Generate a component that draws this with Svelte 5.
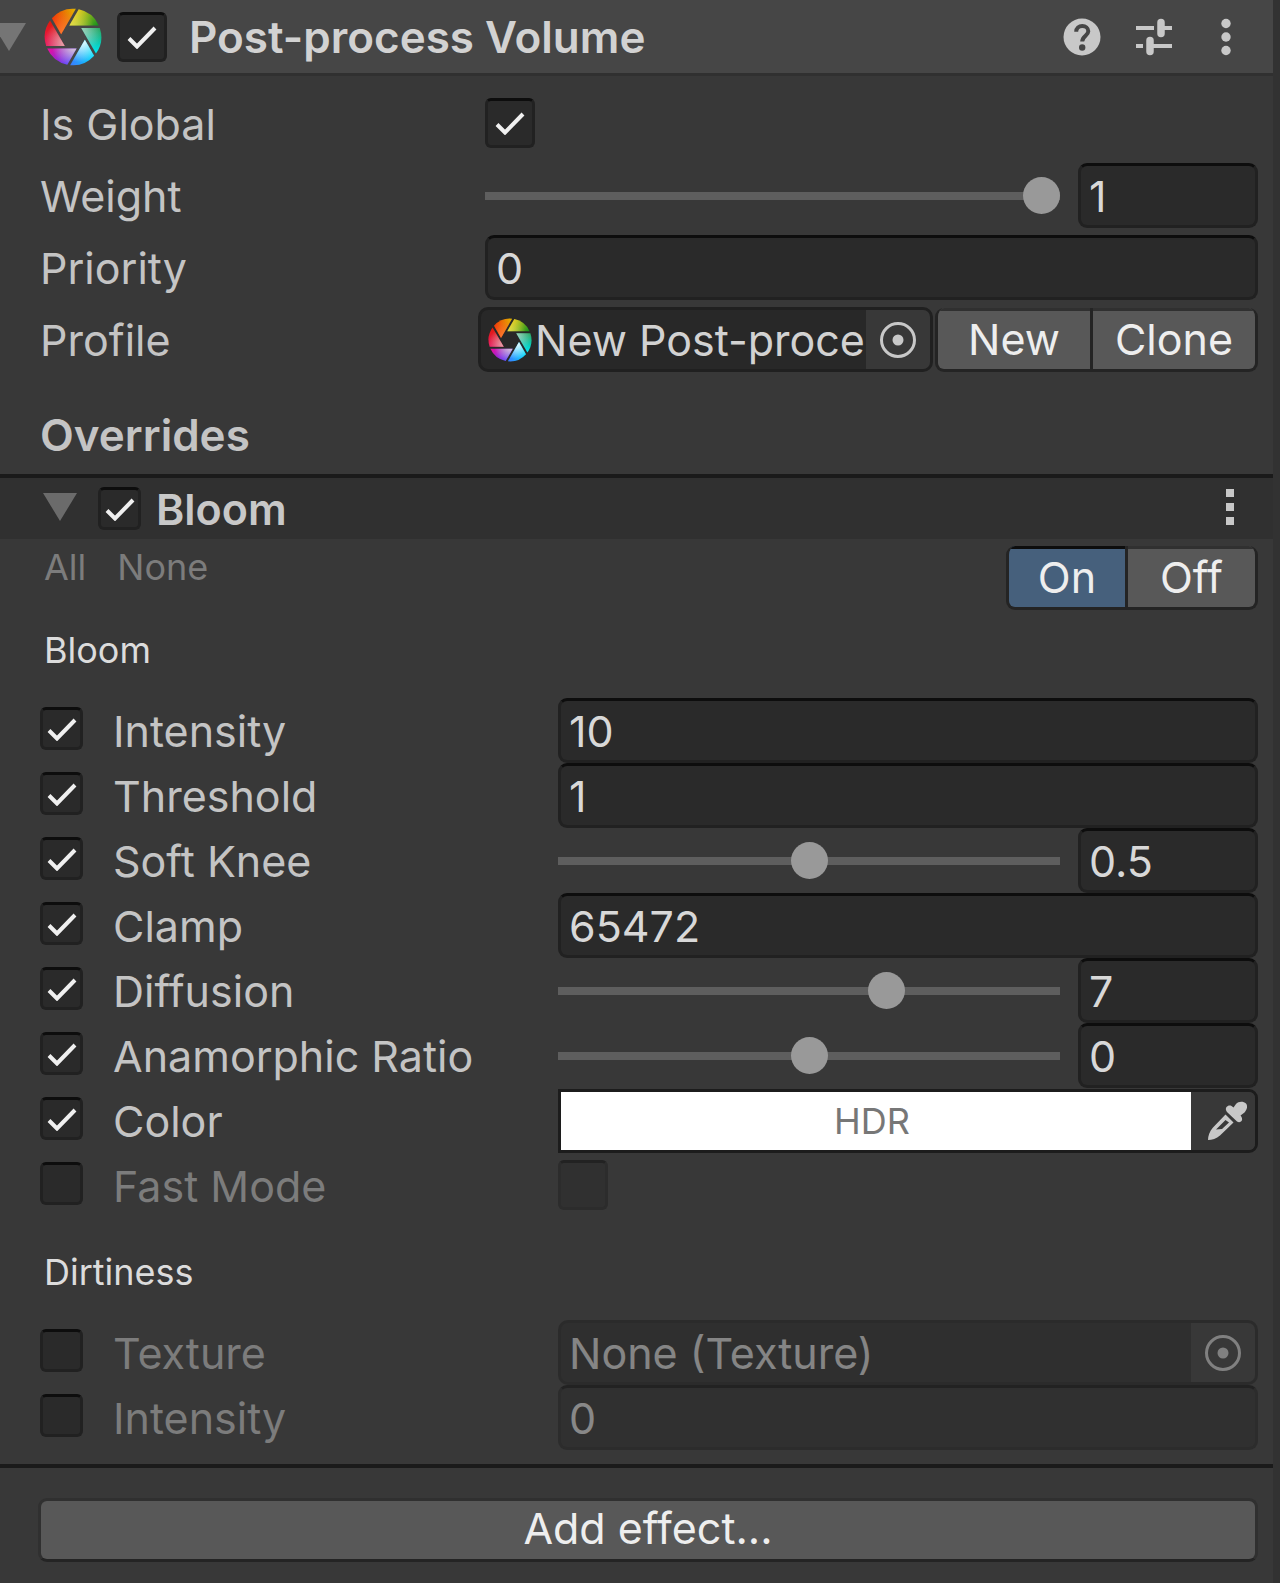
<script lang="ts">
	interface Setting {
		id: string;
		label: string;
		kind: 'number' | 'slider' | 'color' | 'toggle' | 'object';
		value: number | string | boolean;
		enabled: boolean;
		min?: number;
		max?: number;
		step?: number;
	}

	let volumeEnabled = $state(true);
	let isGlobal = $state(true);
	let weight = $state(1);
	let priority = $state('0');

	let bloomEnabled = $state(true);
	let bloomActive = $state(true);

	let bloom = $state<Setting[]>([
		{ id: 'intensity', label: 'Intensity', kind: 'number', value: '10', enabled: true },
		{ id: 'threshold', label: 'Threshold', kind: 'number', value: '1', enabled: true },
		{ id: 'knee', label: 'Soft Knee', kind: 'slider', value: 0.5, enabled: true, min: 0, max: 1, step: 0.01 },
		{ id: 'clamp', label: 'Clamp', kind: 'number', value: '65472', enabled: true },
		{ id: 'diffusion', label: 'Diffusion', kind: 'slider', value: 7, enabled: true, min: 1, max: 10, step: 0.1 },
		{ id: 'ratio', label: 'Anamorphic Ratio', kind: 'slider', value: 0, enabled: true, min: -1, max: 1, step: 0.01 },
		{ id: 'color', label: 'Color', kind: 'color', value: 'HDR', enabled: true },
		{ id: 'fast', label: 'Fast Mode', kind: 'toggle', value: false, enabled: false }
	]);

	let dirtiness = $state<Setting[]>([
		{ id: 'dirt-texture', label: 'Texture', kind: 'object', value: 'None (Texture)', enabled: false },
		{ id: 'dirt-intensity', label: 'Intensity', kind: 'number', value: '0', enabled: false }
	]);

	// Outer colours of each blade, clockwise from the upper right one
	const blades = [
		{ from: '#e0c81c', to: '#14921c', tip: '#f0ea60', glow: 0.6 },
		{ from: '#1fa45c', to: '#00e6f2', tip: '#c8dcd4', glow: 0.7 },
		{ from: '#00dcfa', to: '#3a7cff', tip: '#f2fbff', glow: 0.9 },
		{ from: '#5a3cff', to: '#ec0c9c', tip: '#dccbd8', glow: 0.9 },
		{ from: '#e8125a', to: '#e01c0c', tip: '#e4b4b4', glow: 0.85 },
		{ from: '#f03004', to: '#e2b400', tip: '#ff8a3c', glow: 0.7 }
	];

	function setAll(on: boolean) {
		for (const s of bloom) s.enabled = on;
		for (const s of dirtiness) s.enabled = on;
	}
</script>

{#snippet aperture(name: string)}
	<svg class="aperture" viewBox="-29 -29 58 58" aria-hidden="true">
		<defs>
			{#each blades as b, i}
				<linearGradient id="{name}-rim-{i}" gradientUnits="userSpaceOnUse" x1="6" y1="-27" x2="25" y2="-12">
					<stop offset="0" stop-color={b.from} />
					<stop offset="1" stop-color={b.to} />
				</linearGradient>
				<radialGradient id="{name}-tip-{i}" gradientUnits="userSpaceOnUse" cx="-2" cy="-8" r="23">
					<stop offset="0.2" stop-color={b.tip} stop-opacity={b.glow} />
					<stop offset="1" stop-color={b.tip} stop-opacity="0" />
				</radialGradient>
			{/each}
		</defs>
		{#each blades as _, i}
			<g transform="rotate({i * 60})">
				<path d="M-3.6 -11.6H25.8A28.3 28.3 0 0 0 5.7 -27.7Z" fill="url(#{name}-rim-{i})" />
				<path d="M-3.6 -11.6H25.8A28.3 28.3 0 0 0 5.7 -27.7Z" fill="url(#{name}-tip-{i})" />
			</g>
		{/each}
	</svg>
{/snippet}

{#snippet tick()}
	<svg class="tick" viewBox="0 0 30 24" aria-hidden="true">
		<path d="M2 13.5L10 21.5L28 3" fill="none" stroke="currentColor" stroke-width="4" />
	</svg>
{/snippet}

{#snippet picker()}
	<svg viewBox="0 0 38 38" width="38" height="38" aria-hidden="true">
		<circle cx="19" cy="19" r="16.5" fill="none" stroke="currentColor" stroke-width="3" />
		<circle cx="19" cy="19" r="5.5" fill="currentColor" />
	</svg>
{/snippet}

{#snippet settingRow(s: Setting)}
	<div class="setting">
		<span class="check small">
			<input type="checkbox" id={s.id} bind:checked={s.enabled} />
			{#if s.enabled}{@render tick()}{/if}
		</span>
		<label class="label" class:dim={!s.enabled} for={s.id}>{s.label}</label>
		<div class="control" class:faded={!s.enabled}>
			{#if s.kind === 'number'}
				<input class="field" type="text" aria-label="{s.label} value" disabled={!s.enabled} bind:value={s.value} />
			{:else if s.kind === 'slider'}
				<input
					class="slider"
					type="range"
					aria-label="{s.label} slider"
					min={s.min}
					max={s.max}
					step={s.step}
					bind:value={s.value}
				/>
				<input class="field short" type="text" aria-label="{s.label} value" bind:value={s.value} />
			{:else if s.kind === 'color'}
				<div class="color-field">
					<button class="swatch">{s.value}</button>
					<button class="pick dropper" aria-label="Pick color">
						<svg viewBox="0 0 40 40" width="40" height="40" aria-hidden="true">
							<path
								d="M39 2.5C36.5 0 31.5 0 29 3L26.5 6.5C24 3.5 21 4 19.5 6C18.2 8 19 10 20.500 11.5L30 20.5C32 22 34.5 21 35 19C35.5 17 34.5 16 33.5 14.5L37.5 11.5C40 9 41 5 39 2.5Z"
								fill="currentColor"
							/>
							<path
								d="M18.5 13.5L26.5 21.5L13 34.5C9.5 37.5 5 39 1 39C1 35 2.5 30.5 6 26.5ZM18.5 19L9 28.5L15 28L22 21.5Z"
								fill="currentColor"
								fill-rule="evenodd"
							/>
						</svg>
					</button>
				</div>
			{:else if s.kind === 'toggle'}
				<span class="check">
					<input type="checkbox" aria-label="{s.label} value" disabled={!s.enabled} />
				</span>
			{:else}
				<div class="object-field">
					<span class="object-name">{s.value}</span>
					<button class="pick" aria-label="Select texture" disabled={!s.enabled}>{@render picker()}</button>
				</div>
			{/if}
		</div>
	</div>
{/snippet}

<main class="inspector">
	<header class="component-header">
		<button class="fold" aria-label="Collapse component">
			<svg viewBox="0 0 34 28" width="34" height="28" aria-hidden="true"><path d="M0 0H34L17 28Z" fill="#757575" /></svg>
		</button>
		{@render aperture('head')}
		<span class="check">
			<input type="checkbox" id="volume" bind:checked={volumeEnabled} />
			{#if volumeEnabled}{@render tick()}{/if}
		</span>
		<label class="title" for="volume">Post-process Volume</label>
		<div class="tools">
			<button aria-label="Help">
				<svg viewBox="0 0 38 38" width="38" height="38" aria-hidden="true">
					<circle cx="19" cy="19" r="18.5" fill="currentColor" />
					<path
						d="M13.2 13.8C13.2 10.2 16 8 19.300 8C22.6 8 25.3 10 25.3 13.3C25.3 17.5 19.2 18 19.2 23.500"
						fill="none"
						stroke="#464646"
						stroke-width="4"
					/>
					<circle cx="19.2" cy="29.5" r="3.2" fill="#464646" />
				</svg>
			</button>
			<button aria-label="Presets">
				<svg viewBox="0 0 38 38" width="38" height="38" aria-hidden="true">
					<g fill="none" stroke="currentColor">
						<path d="M1 10H19M29 10H37M1 28H8M18 28H37" stroke-width="4" />
						<path d="M26 4.5V15.5M15 22.5V33.5" stroke-width="7.5" stroke-linecap="round" />
					</g>
				</svg>
			</button>
			<button aria-label="More options">
				<svg viewBox="0 0 38 38" width="38" height="38" aria-hidden="true">
					<g fill="currentColor">
						<circle cx="19" cy="5.5" r="4.7" />
						<circle cx="19" cy="19" r="4.7" />
						<circle cx="19" cy="32.5" r="4.7" />
					</g>
				</svg>
			</button>
		</div>
	</header>

	<section class="volume">
		<div class="row">
			<label class="label" for="global">Is Global</label>
			<div class="control">
				<span class="check">
					<input type="checkbox" id="global" bind:checked={isGlobal} />
					{#if isGlobal}{@render tick()}{/if}
				</span>
			</div>
		</div>
		<div class="row">
			<label class="label" for="weight">Weight</label>
			<div class="control">
				<input class="slider" type="range" id="weight" min="0" max="1" step="0.01" bind:value={weight} />
				<input class="field short" type="text" aria-label="Weight value" bind:value={weight} />
			</div>
		</div>
		<div class="row">
			<label class="label" for="priority">Priority</label>
			<div class="control">
				<input class="field" type="text" id="priority" bind:value={priority} />
			</div>
		</div>
		<div class="row profile">
			<span class="label">Profile</span>
			<div class="control">
				<div class="object-field">
					{@render aperture('profile')}
					<span class="object-name">New Post-proce</span>
					<button class="pick" aria-label="Select profile">{@render picker()}</button>
				</div>
				<div class="button-group">
					<button class="new">New</button>
					<button class="clone">Clone</button>
				</div>
			</div>
		</div>
		<h2 class="overrides">Overrides</h2>
	</section>

	<section class="effect">
		<header class="effect-header">
			<button class="fold" aria-label="Collapse Bloom">
				<svg viewBox="0 0 34 28" width="34" height="28" aria-hidden="true"><path d="M0 0H34L17 28Z" fill="#6b6b6b" /></svg>
			</button>
			<span class="check small">
				<input type="checkbox" id="bloom" bind:checked={bloomEnabled} />
				{#if bloomEnabled}{@render tick()}{/if}
			</span>
			<label class="title" for="bloom">Bloom</label>
			<button class="menu" aria-label="Bloom options">
				<svg viewBox="0 0 12 38" width="12" height="38" aria-hidden="true">
					<path d="M2 1H10V9H2ZM2 15H10V23H2ZM2 29H10V37H2Z" fill="#c8c8c8" />
				</svg>
			</button>
		</header>

		<div class="effect-body">
			<div class="switches">
				<div class="bulk">
					<button onclick={() => setAll(true)}>All</button>
					<button onclick={() => setAll(false)}>None</button>
				</div>
				<div class="button-group">
					<button class="on" class:active={bloomActive} onclick={() => (bloomActive = true)}>On</button>
					<button class="off" class:active={!bloomActive} onclick={() => (bloomActive = false)}>Off</button>
				</div>
			</div>

			<h3>Bloom</h3>
			{#each bloom as s (s.id)}
				{@render settingRow(s)}
			{/each}

			<h3 class="spaced">Dirtiness</h3>
			{#each dirtiness as s (s.id)}
				{@render settingRow(s)}
			{/each}
		</div>
	</section>

	<footer>
		<button class="add">Add effect...</button>
	</footer>
</main>

<style>
	:global(body) {
		margin: 0;
		background: #383838;
	}

	.inspector {
		box-sizing: border-box;
		border-right: 7px solid #323232;
		background: #383838;
		color: #c4c4c4;
		font-family: Inter, 'Liberation Sans', sans-serif;
		font-size: 43px;
		line-height: 52px;
	}

	button {
		margin: 0;
		padding: 0;
		border: none;
		background: none;
		color: inherit;
		font: inherit;
		cursor: pointer;
	}

	svg {
		display: block;
		flex-shrink: 0;
	}

	.component-header {
		display: flex;
		align-items: center;
		height: 73px;
		padding-right: 28px;
		background: #464646;
		border-bottom: 3px solid #303030;
	}

	.component-header .fold {
		margin-left: -8px;
	}

	.aperture {
		width: 58px;
		height: 58px;
	}

	.component-header .aperture {
		margin: 0 15px 0 18px;
	}

	.title {
		font-weight: 600;
		color: #d2d2d2;
	}

	.component-header .title {
		flex: 1;
		margin-left: 22px;
		font-size: 44px;
	}

	.tools {
		display: flex;
		gap: 34px;
		color: #c8c8c8;
	}

	.check {
		position: relative;
		display: block;
		width: 50px;
		height: 50px;
		flex-shrink: 0;
		color: #f0f0f0;
	}

	.check.small {
		width: 43px;
		height: 43px;
	}

	.check input {
		appearance: none;
		box-sizing: border-box;
		display: block;
		width: 100%;
		height: 100%;
		margin: 0;
		background: #2a2a2a;
		border: 3px solid #212121;
		border-top-color: #0d0d0d;
		border-radius: 6px;
	}

	.tick {
		position: absolute;
		inset: 0;
		width: 30px;
		height: 24px;
		margin: auto;
		pointer-events: none;
	}

	.volume {
		padding: 15px 15px 0 40px;
	}

	.row {
		display: grid;
		grid-template-columns: 445px 1fr;
		align-items: center;
		height: 65px;
		margin-bottom: 7px;
	}

	.row.profile {
		grid-template-columns: 438px 1fr;
		margin-bottom: 0;
	}

	.control {
		display: flex;
		align-items: center;
		min-width: 0;
		height: 65px;
	}

	.control .check {
		margin-bottom: 2px;
	}

	.control.faded {
		opacity: 0.5;
	}

	.label.dim {
		color: #7c7c7c;
	}

	.field {
		box-sizing: border-box;
		flex: 1;
		min-width: 0;
		width: 100%;
		height: 65px;
		margin: 0;
		padding: 0 8px;
		background: #2a2a2a;
		border: 3px solid #212121;
		border-top-color: #0d0d0d;
		border-radius: 9px;
		color: #d8d8d8;
		font: inherit;
	}

	.field.short {
		flex: 0 0 180px;
		margin-left: 18px;
	}

	.slider {
		appearance: none;
		flex: 1;
		min-width: 0;
		height: 37px;
		margin: 0;
		background: none;
	}

	.slider::-webkit-slider-runnable-track {
		height: 8px;
		background: #5e5e5e;
	}

	.slider::-webkit-slider-thumb {
		appearance: none;
		width: 37px;
		height: 37px;
		margin-top: -15px;
		border: none;
		border-radius: 50%;
		background: #999;
	}

	.object-field {
		box-sizing: border-box;
		display: flex;
		align-items: center;
		flex: 1;
		min-width: 0;
		height: 65px;
		background: #282828;
		border: 3px solid #202020;
		border-radius: 10px;
		overflow: hidden;
		color: #d2d2d2;
	}

	.object-field .aperture {
		width: 44px;
		height: 44px;
		margin-left: 7px;
	}

	.object-name {
		flex: 1;
		min-width: 0;
		padding-left: 8px;
		overflow: hidden;
		white-space: nowrap;
	}

	.object-field .aperture + .object-name {
		padding-left: 3px;
	}

	.pick {
		display: flex;
		align-items: center;
		justify-content: center;
		width: 64px;
		height: 100%;
		flex-shrink: 0;
		background: #383838;
		color: #c8c8c8;
	}

	.pick.dropper {
		justify-content: flex-end;
		padding-right: 8px;
		box-sizing: border-box;
	}

	.button-group {
		box-sizing: border-box;
		display: flex;
		gap: 3px;
		height: 64px;
		background: #242424;
		border: 3px solid #242424;
		border-top: none;
		border-radius: 9px;
		overflow: hidden;
		color: #eee;
	}

	.button-group button {
		padding-bottom: 2px;
		background: #585858;
		border-top: 3px solid #303030;
	}

	.profile .button-group {
		margin-left: 2px;
	}

	.new {
		width: 152px;
	}

	.clone {
		width: 162px;
	}

	.on {
		width: 116px;
	}

	.off {
		width: 127px;
	}

	.button-group .active {
		background: #46607c;
		border-top-color: #0d0d0d;
	}

	.overrides {
		margin: 0;
		padding: 37px 0 13px;
		font-size: 44px;
		font-weight: 600;
	}

	.effect {
		border-top: 4px solid #1a1a1a;
		border-bottom: 4px solid #1a1a1a;
	}

	.effect-header {
		display: flex;
		align-items: center;
		height: 61px;
		padding: 0 37px 0 43px;
		background: #303030;
	}

	.effect-header .check {
		margin: 0 15px 0 21px;
	}

	.effect-header .fold,
	.effect-header .menu {
		margin-bottom: 4px;
	}

	.effect-header .title {
		flex: 1;
		color: #c8c8c8;
	}

	.effect-body {
		padding: 7px 15px 14px 40px;
	}

	.switches {
		display: flex;
		align-items: flex-start;
		justify-content: space-between;
	}

	.bulk {
		display: flex;
		gap: 31px;
		padding-left: 4px;
		color: #7c7c7c;
		font-size: 36px;
		line-height: 42px;
	}

	h3 {
		margin: 0;
		padding: 19px 4px 27px;
		color: #dcdcdc;
		font-size: 36px;
		font-weight: 400;
		line-height: 42px;
	}

	h3.spaced {
		padding-top: 33px;
	}

	.setting {
		display: grid;
		grid-template-columns: 43px 415px 1fr;
		column-gap: 30px;
		align-items: center;
		height: 65px;
	}

	.setting .check.small {
		margin-bottom: 4px;
	}

	.color-field {
		box-sizing: border-box;
		display: flex;
		flex: 1;
		height: 64px;
		border: 3px solid #1c1c1c;
		border-radius: 0 9px 9px 0;
		overflow: hidden;
	}

	.swatch {
		flex: 1;
		padding-right: 8px;
		background: #fff;
		color: #777;
		font-size: 36px;
	}

	footer {
		padding: 30px 15px 22px 38px;
	}

	.add {
		box-sizing: border-box;
		display: block;
		width: 100%;
		height: 64px;
		padding-bottom: 4px;
		background: #585858;
		border: 3px solid #303030;
		border-bottom-color: #242424;
		border-radius: 9px;
		color: #eee;
	}
</style>
